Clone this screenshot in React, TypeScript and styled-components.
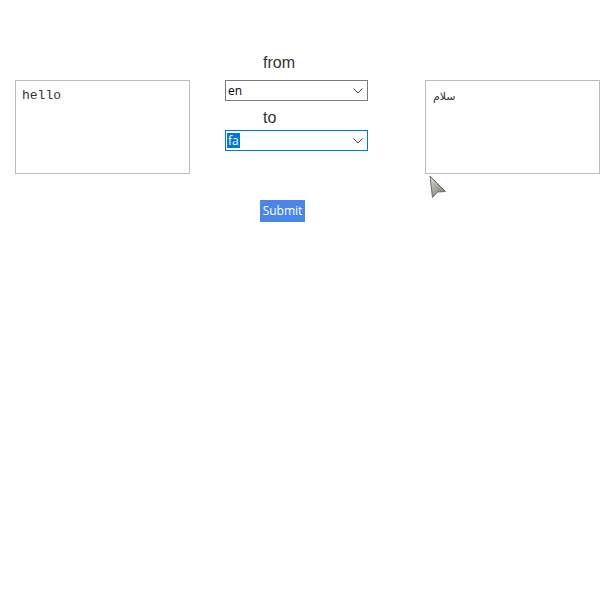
import React from "react";
import styled, { createGlobalStyle } from "styled-components";

const Global = createGlobalStyle`
  html, body { margin: 0; padding: 0; background: #fff; }
  body { font-family: "Liberation Sans", Arial, sans-serif; }
`;

const Page = styled.div`
  padding: 50px 0 0 15px;
  width: 600px;
  box-sizing: border-box;
`;

const Form = styled.div`
  display: grid;
  grid-template-columns: 175px 235px 175px;
  grid-template-rows: 30px 21px 29px 21px 23px;
`;

const TextBox = styled.textarea<{ $col: number; $mono?: boolean }>`
  grid-column: ${(p) => p.$col};
  grid-row: 2 / 6;
  width: 175px;
  height: 94px;
  box-sizing: border-box;
  margin: 0;
  border: 1px solid #bcbcbc;
  padding: ${(p) => (p.$mono ? "7px 6px" : "8px 7px")};
  resize: none;
  outline: none;
  overflow: hidden;
  color: #333;
  background: #fff;
  font-family: ${(p) =>
    p.$mono ? `"Liberation Mono", "Courier New", monospace` : `"DejaVu Sans", "Noto Sans", sans-serif`};
  font-size: ${(p) => (p.$mono ? "13px" : "11px")};
  line-height: 16px;
`;

const Label = styled.div<{ $row: number; $pb: number }>`
  grid-column: 2;
  grid-row: ${(p) => p.$row};
  align-self: end;
  padding: 0 0 ${(p) => p.$pb}px 73px;
  font-size: 16px;
  line-height: 19px;
  color: #333;
`;

const SelectBox = styled.div<{ $row: number; $focused?: boolean }>`
  grid-column: 2;
  grid-row: ${(p) => p.$row};
  margin-left: 35px;
  width: 143px;
  height: 21px;
  box-sizing: border-box;
  border: 1px solid ${(p) => (p.$focused ? "#0078d7" : "#7a7a7a")};
  background: #fff;
  display: flex;
  align-items: center;
  justify-content: space-between;
  padding: 0 4px 0 1px;
  font-size: 12px;
  color: #000;
  font-family: "Open Sans", "Liberation Sans", sans-serif;
`;

const Value = styled.span<{ $selected?: boolean }>`
  padding: 0 1px;
  line-height: 15px;
  background: ${(p) => (p.$selected ? "#0078d7" : "transparent")};
  color: ${(p) => (p.$selected ? "#fff" : "#000")};
`;

const Chevron = () => (
  <svg width="10" height="6" viewBox="0 0 10 6">
    <path d="M0.5 0.5 L5 5 L9.5 0.5" fill="none" stroke="#444" strokeWidth="1" />
  </svg>
);

const ButtonRow = styled.div`
  padding: 26px 0 0 245px;
  position: relative;
`;

const Button = styled.button`
  margin: 0;
  border: none;
  background: #4a86e8;
  color: #fff;
  font-family: "Open Sans", "Liberation Sans", sans-serif;
  font-size: 12px;
  line-height: 22px;
  height: 22px;
  width: 45px;
  padding: 0;
`;

const Cursor = styled.svg`
  position: absolute;
  left: 414px;
  top: 1px;
`;

export default function App() {
  return (
    <>
      <Global />
      <Page>
        <Form>
          <TextBox $col={1} $mono readOnly value="hello" />
          <Label $row={1} $pb={8}>from</Label>
          <SelectBox $row={2}>
            <Value>en</Value>
            <Chevron />
          </SelectBox>
          <Label $row={3} $pb={3}>to</Label>
          <SelectBox $row={4} $focused>
            <Value $selected>fa</Value>
            <Chevron />
          </SelectBox>
          <TextBox $col={3} readOnly value="سلام" />
        </Form>
        <ButtonRow>
          <Cursor width="20" height="26" viewBox="0 0 20 26">
            <defs>
              <linearGradient id="cg" x1="0" y1="0" x2="1" y2="1">
                <stop offset="0" stopColor="#d8d8d8" />
                <stop offset="0.6" stopColor="#9a9a90" />
                <stop offset="1" stopColor="#6f7060" />
              </linearGradient>
            </defs>
            <path d="M1 1 L16.5 16.5 L8.5 17 L3.5 22.5 Z" fill="url(#cg)" stroke="#6a6a6a" strokeWidth="1" strokeLinejoin="round" />
          </Cursor>
          <Button>Submit</Button>
        </ButtonRow>
      </Page>
    </>
  );
}
